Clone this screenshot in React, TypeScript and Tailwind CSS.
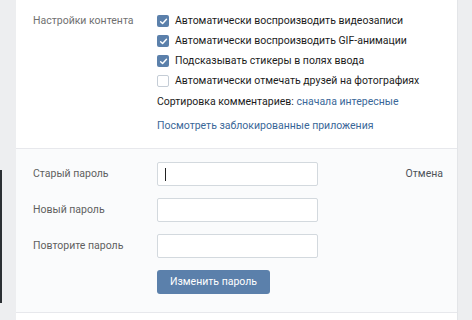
import React from 'react';

const checks = [
  { label: 'Автоматически воспроизводить видеозаписи', on: true },
  { label: 'Автоматически воспроизводить GIF-анимации', on: true },
  { label: 'Подсказывать стикеры в полях ввода', on: true },
  { label: 'Автоматически отмечать друзей на фотографиях', on: false },
];

const Box: React.FC<{ on: boolean }> = ({ on }) =>
  on ? (
    <span className="w-[12px] h-[12px] rounded-[2px] bg-[#5b80ab] flex items-center justify-center shrink-0">
      <svg width="9" height="9" viewBox="0 0 10 10" fill="none">
        <path d="M1.8 5.2 L4 7.3 L8.3 2.6" stroke="#fff" strokeWidth="1.6" strokeLinecap="round" strokeLinejoin="round" />
      </svg>
    </span>
  ) : (
    <span className="w-[12px] h-[12px] rounded-[2px] border border-[#c5cdd6] bg-white shrink-0" />
  );

const Field: React.FC<{ label: string; caret?: boolean }> = ({ label, caret }) => (
  <div className="flex items-center h-[24px]">
    <div className="w-[124px] text-[#5f5f5f]">{label}</div>
    <div className="w-[161px] h-[24px] border border-[#d3d9de] rounded-[2px] bg-white flex items-center px-[7px]">
      {caret && <span className="w-[1px] h-[13px] bg-[#222]" />}
    </div>
  </div>
);

export default function App() {
  return (
    <div
      className="w-[472px] h-[320px] flex bg-[#edeef0] text-[10.5px] overflow-hidden"
      style={{ fontFamily: 'Roboto, "Open Sans", sans-serif' }}
    >
      <div className="w-[16px] shrink-0 flex flex-col">
        <div className="mt-[170px] w-[2px] h-[133px] bg-[#2b2f33]" />
      </div>

      <div className="w-[442px] shrink-0 bg-white flex flex-col border-r border-[#e3e5e8]">
        <div className="flex pl-[17px] pt-[11px] h-[148px] leading-[20px]">
          <div className="w-[124px] text-[#707070]">Настройки контента</div>
          <div className="flex flex-col">
            {checks.map((c) => (
              <div key={c.label} className="flex items-center gap-[6px] h-[20px] text-[#1c1c1c]">
                <Box on={c.on} />
                <span>{c.label}</span>
              </div>
            ))}
            <div className="mt-[1px] text-[#1c1c1c]">
              Сортировка комментариев: <span className="text-[#3a6798]">сначала интересные</span>
            </div>
            <div className="mt-[4px] text-[#3a6798]">Посмотреть заблокированные приложения</div>
          </div>
        </div>

        <div className="border-t border-b border-[#e7e8ec] bg-[#fafbfc] h-[165px] pl-[17px] pr-[14px] pt-[13px] flex">
          <div className="flex flex-col gap-[12px]">
            <Field label="Старый пароль" caret />
            <Field label="Новый пароль" />
            <Field label="Повторите пароль" />
            <div className="pl-[124px]">
              <button className="w-[113px] h-[24px] rounded-[3px] bg-[#5b80ab] text-white text-[10.5px]">
                Изменить пароль
              </button>
            </div>
          </div>
          <div className="ml-auto h-[24px] flex items-center text-[#4e5359]">Отмена</div>
        </div>
      </div>

      <div className="flex-1" />
    </div>
  );
}
